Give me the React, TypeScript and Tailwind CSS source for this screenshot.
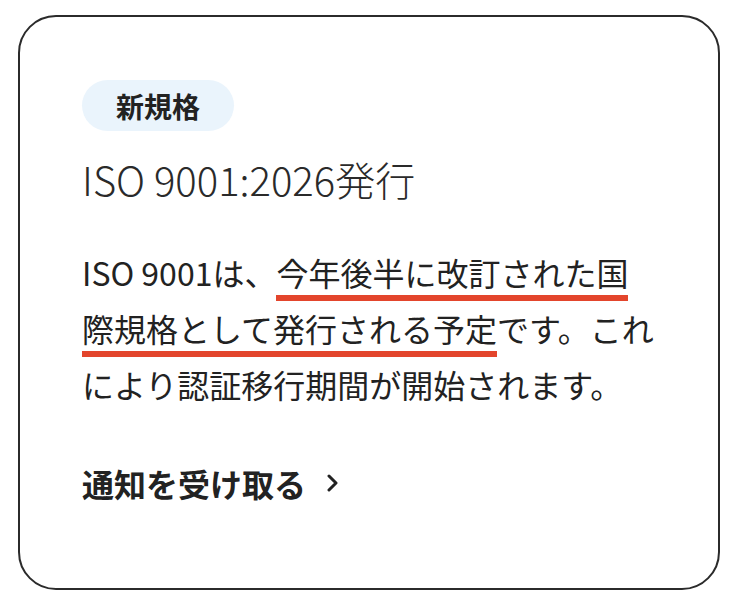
import React from "react";

const font = "font-['Noto_Sans_CJK_JP','Noto_Sans',sans-serif]";

const Mark = ({ children }: { children: React.ReactNode }) => (
  <span className="border-b-[6px] border-[#e3452c]">{children}</span>
);

const App = () => {
  return (
    <div className={`w-[740px] h-[604px] bg-white pt-[15px] pl-[18px] pr-[20px] pb-[14px] ${font}`}>
      <div className="h-full rounded-[38px] border-2 border-[#2b2b2b] pt-[63px] pl-[62px] pr-[56px]">
        {/* badge */}
        <div className="inline-flex h-[51px] items-center rounded-full bg-[#eaf4fc] px-[34px]">
          <span className="text-[28px] leading-none font-bold text-[#222]">新規格</span>
        </div>

        <h2 className="mt-[20px] text-[40px] leading-[56px] font-light text-[#2a2a2a]">
          ISO 9001:2026発行
        </h2>

        <p className="mt-[37px] whitespace-nowrap text-[32px] leading-[56px] text-[#222]">
          ISO 9001は、<Mark>今年後半に改訂された国</Mark>
          <br />
          <Mark>際規格として発行される予定</Mark>です。これ
          <br />
          により認証移行期間が開始されます。
        </p>

        <a href="#" className="mt-[47px] flex items-center text-[32px] leading-[48px] font-bold text-[#222]">
          通知を受け取る
          <svg width="12" height="20" viewBox="0 0 12 20" className="ml-[20px]" fill="none">
            <path d="M3 3 L10 10 L3 17" stroke="#222" strokeWidth="3" strokeLinecap="round" strokeLinejoin="round" />
          </svg>
        </a>
      </div>
    </div>
  );
};

export default App;
